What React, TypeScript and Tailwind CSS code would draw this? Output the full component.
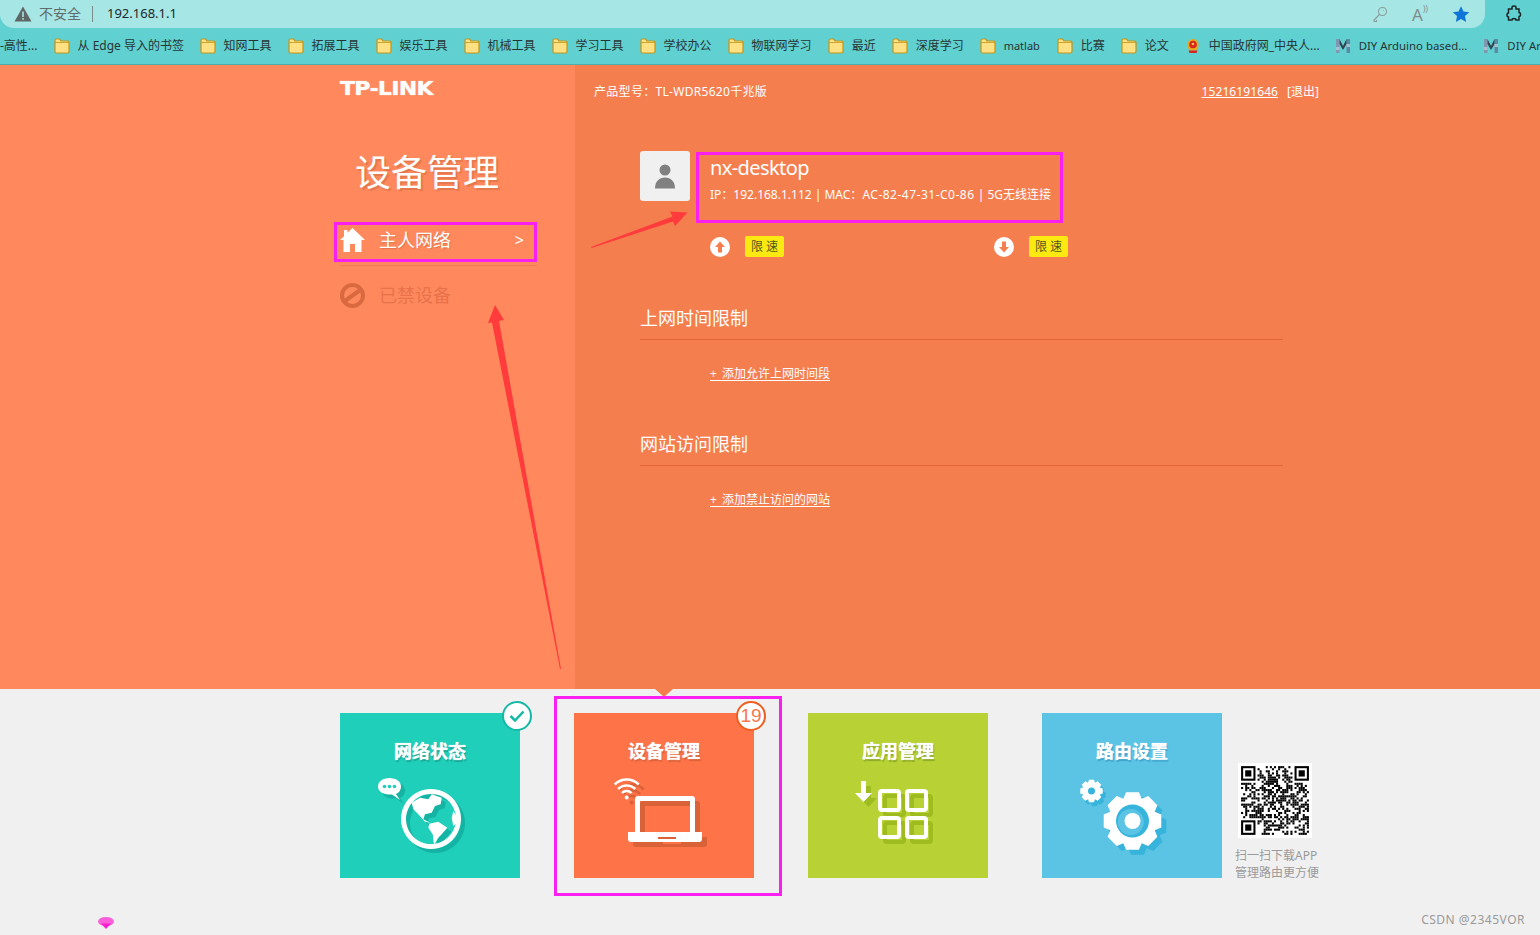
const FONT = "font-['Noto_Sans','Noto_Sans_CJK_SC',sans-serif]";

const BOOKMARKS = [
  { label: "从 Edge 导入的书签", cls: "w-[106px]" },
  { label: "知网工具", cls: "" },
  { label: "拓展工具", cls: "" },
  { label: "娱乐工具", cls: "" },
  { label: "机械工具", cls: "" },
  { label: "学习工具", cls: "" },
  { label: "学校办公", cls: "" },
  { label: "物联网学习", cls: "" },
  { label: "最近", cls: "" },
  { label: "深度学习", cls: "" },
  { label: "matlab", cls: "w-[37px] text-[11px]" },
  { label: "比赛", cls: "" },
  { label: "论文", cls: "" },
];

function Folder() {
  return (
    <svg width="16" height="16" viewBox="0 0 16 16" className="shrink-0">
      <path d="M1 2.500C1 1.500 1.600 1 2.500 1H5.500l1.500 2h6.500c1 0 1.500.5 1.500 1.500v9c0 1-.5 1.500-1.500 1.500h-11C1.500 15 1 14.500 1 13.500z" fill="#ffe082" stroke="#c2951a" strokeWidth="1.200" />
      <path d="M1 4.500h14" stroke="#c2951a" strokeWidth="0.800" />
    </svg>
  );
}

function MLogo() {
  return (
    <svg width="16" height="16" viewBox="0 0 16 16" className="shrink-0">
      <path d="M1 1h3.500v14H1z" fill="#7d98b0" />
      <path d="M11.500 1H15v14h-3.500z" fill="#5f88a6" />
      <path d="M4.500 1 8 8l3.500-7v5L8 12 4.500 6z" fill="#33424f" />
      <path d="M1 9h3.500v3H1zM11.500 6H15v3h-3.500z" fill="#a9bfd0" />
    </svg>
  );
}

function Emblem() {
  return (
    <svg width="16" height="16" viewBox="0 0 16 16" className="shrink-0">
      <path d="M2.500 7c0-3.500 2.500-6 5.500-6s5.500 2.500 5.500 6c0 2.500-1 4.500-2.500 5.500H5C3.500 11.500 2.500 9.500 2.500 7z" fill="#e8a91f" />
      <circle cx="8" cy="6.500" r="3.800" fill="#d7261e" />
      <circle cx="8" cy="6" r="1.300" fill="#f5c33b" />
      <path d="M3.500 12.500h9l-1 2.500h-7z" fill="#d7261e" />
    </svg>
  );
}

function BrowserChrome() {
  return (
    <div className={`h-[65px] bg-[#60d0d0] border-b border-[#4aaeae] ${FONT}`}>
      <div className="flex h-[28px]">
        <div className="flex flex-1 items-center rounded-br-[14px] rounded-bl-[14px] bg-[#a6e6e4] pl-[14px] pr-[15px]">
          <svg width="18" height="16" viewBox="0 0 18 16">
            <path d="M9 .5 17.500 15.500H.5z" fill="#5f6666" />
            <path d="M8.200 5.500h1.600v5.500H8.200zM8.200 12h1.600v1.700H8.200z" fill="#a6e6e4" />
          </svg>
          <span className="ml-[7px] -translate-y-px text-[14px] text-[#626b6b]">不安全</span>
          <span className="ml-[11px] h-[16px] w-px bg-[#7b8c8c]" />
          <span className="ml-[14px] text-[13px] text-[#20282c]">192.168.1.1</span>
          <div className="ml-auto flex items-center gap-[24px]">
            <svg width="16" height="16" viewBox="0 0 16 16" fill="none" stroke="#8c9a9a" strokeWidth="1.100">
              <circle cx="10.500" cy="5.500" r="4" />
              <path d="M7.500 8.500 2 14v1.500h2.500V14M11 4.500h.5" />
            </svg>
            <span className="relative w-[16px] text-[17px] leading-none text-[#808c8c]">A<span className="absolute left-[11px] top-[-1px] text-[8px]">))</span></span>
            <svg width="18" height="18" viewBox="0 0 24 24" fill="#0f75d9">
              <path d="M12 1.500 15.300 8.500 23 9.500l-5.700 5.300 1.500 7.700L12 18.700l-6.800 3.800 1.500-7.700L1 9.500l7.700-1z" />
            </svg>
          </div>
        </div>
        <div className="flex w-[55px] items-center pl-[20px]">
          <svg width="18" height="18" viewBox="0 0 18 18" fill="none" stroke="#1d2424" strokeWidth="1.500">
            <path d="M7 2.500c0-2 4-2 4 0v1.500h3v3.500c2 0 2 4 0 4V15H11c0-2-4-2-4 0H3.500v-3c-2 0-2-4 0-4V4H7z" />
          </svg>
        </div>
      </div>
      <div className="flex h-[36px] items-center gap-4 overflow-hidden whitespace-nowrap text-[12px] text-[#273535]">
        <span className="shrink-0">-高性...</span>
        {BOOKMARKS.map((b) => (
          <div key={b.label} className="flex shrink-0 items-center gap-2">
            <Folder />
            <span className={b.cls}>{b.label}</span>
          </div>
        ))}
        <div className="flex shrink-0 items-center gap-2">
          <Emblem />
          <span className="w-[110px]">中国政府网_中央人...</span>
        </div>
        <div className="flex shrink-0 items-center gap-2">
          <MLogo />
          <span className="text-[11.4px]">DIY Arduino based...</span>
        </div>
        <div className="flex shrink-0 items-center gap-2">
          <MLogo />
          <span className="text-[11.4px]">DIY Ar</span>
        </div>
      </div>
    </div>
  );
}

function HomeIcon() {
  return (
    <svg width="25" height="24" viewBox="0 0 25 24" fill="#fff">
      <path d="M12.500 0 25 12h-3.500v12h-6.500v-8h-5v8H3.500V12H0L4 8.200V2h3.500v2.800z" />
    </svg>
  );
}

function BanIcon() {
  return (
    <svg width="25" height="25" viewBox="0 0 25 25" fill="none" stroke="#d9693f" strokeWidth="4">
      <circle cx="12.500" cy="12.500" r="10.500" />
      <path d="M5.500 17.500 19.500 7.500" />
    </svg>
  );
}

function Sidebar() {
  return (
    <div className="w-[575px] shrink-0 bg-[#ff895d] pl-[340px] pr-[38px]">
      <div className="mt-[15px] h-[16px] origin-left scale-x-[1.16] font-['DejaVu_Sans',sans-serif] text-[19px] font-bold leading-[16px] tracking-[-0.6px] text-white [text-shadow:0_0_1px_#fff]">TP-LINK</div>
      <h1 className="mt-[53px] pl-[15px] text-[36px] leading-[48px] text-white [text-shadow:2px_2px_1px_rgba(180,90,50,0.35)]">设备管理</h1>
      <div className="mt-[22px] flex h-[42px] items-center">
        <HomeIcon />
        <span className="ml-[14px] text-[18px] text-white [text-shadow:1px_1px_1px_rgba(180,90,50,0.4)]">主人网络</span>
        <span className="ml-auto pr-[13px] text-[16px] text-white">&gt;</span>
      </div>
      <div className="mt-[4px] h-px bg-[#e87c54]" />
      <div className="mt-[15px] flex h-[28px] items-center">
        <BanIcon />
        <span className="ml-[14px] text-[18px] text-[#e8734a]">已禁设备</span>
      </div>
    </div>
  );
}

function LimitRow({ up }: { up: boolean }) {
  return (
    <div className="flex w-[284px] items-center">
      <svg width="20" height="20" viewBox="0 0 20 20">
        <circle cx="10" cy="10" r="10" fill="#fff" />
        {up ? (
          <path d="M10 4.500 15 10h-3v5.500H8V10H5z" fill="#f57e4f" />
        ) : (
          <path d="M10 15.500 15 10h-3V4.500H8V10H5z" fill="#f57e4f" />
        )}
      </svg>
      <span className="ml-[15px] flex h-[21px] w-[39px] items-center justify-center rounded-[2px] bg-[#fbe911] pl-[3px] text-[12px] tracking-[3px] text-[#4f5a20]">限速</span>
    </div>
  );
}

function Section({ title, link }: { title: string; link: string }) {
  return (
    <div className="w-[643px]">
      <div className="h-[34px] text-[18px] leading-[26px] text-white">{title}</div>
      <div className="h-px bg-[#e0663a]" />
      <div className="h-[34px] pl-[70px] pt-[24px] text-[12px] leading-[20px] text-white">
        <span className="underline underline-offset-2"><span className="tracking-[1px]">+ </span>{link}</span>
      </div>
    </div>
  );
}

function DetailPanel() {
  return (
    <div className="flex-1 bg-[#f57e4f] text-white">
      <div className="mt-[18px] flex h-[18px] items-center justify-between pl-[19px] pr-[221px] text-[12px]">
        <span className="tracking-[0.3px]">产品型号：TL-WDR5620千兆版</span>
        <span className="flex gap-[9px]">
          <span className="tracking-[0.1px] underline">15216191646</span>
          <span>[退出]</span>
        </span>
      </div>
      <div className="mt-[50px] pl-[65px]">
        <div className="flex">
          <div className="flex h-[50px] w-[50px] items-center justify-center rounded-[3px] bg-[#f0f0f0]">
            <svg width="22" height="25" viewBox="0 0 22 25" fill="#808080">
              <circle cx="11" cy="6" r="5.500" />
              <path d="M1 24.500c0-7 4-11 10-11s10 4 10 11z" />
            </svg>
          </div>
          <div className="ml-[20px]">
            <div className="mt-[3px] text-[20px] leading-[28px] tracking-[-0.6px]">nx-desktop</div>
            <div className="mt-[4px] whitespace-pre text-[12px] leading-[18px]">
              IP：192.168.1.112 | MAC：<span className="tracking-[0.5px]">AC-82-47-31-C0-86</span> | 5G无线连接
            </div>
          </div>
        </div>
        <div className="ml-[70px] mt-[32px] flex">
          <LimitRow up />
          <LimitRow up={false} />
        </div>
        <div className="mt-[48px] flex flex-col gap-[57px]">
          <Section title="上网时间限制" link="添加允许上网时间段" />
          <Section title="网站访问限制" link="添加禁止访问的网站" />
        </div>
      </div>
    </div>
  );
}

function GlobeIcon() {
  const art = (
    <>
      <path d="M1 11.500C1 6.500 6 3 12.500 3S24 6.500 24 11.500c0 4-2.500 6.500-5 7.500l4 6-8-5.500C7 20 1 17 1 11.500z" />
      <path fillRule="evenodd" d="M54 14a30 30 0 1 0 .01 0zM54 19a25 25 0 1 1-.01 0z" />
      <g transform="translate(0 1)">
        <path d="M34.700 26.700 43 21.700 51.300 23.300 54.700 18.300 64.700 21.700 63.700 28.300 58 30 54.700 36.700 48 38.300 46.300 43.300 53 46.700 48 45.700 41.300 38.300 36.300 33.300z" />
        <path d="M52.300 47.700 61.300 45.700 70.300 51.700 64.700 58.300 61.300 61.700 57 69 55.700 58.300 51.300 51.700z" />
        <path d="M76.300 35 82.300 45 76.300 50 74.700 42z" />
      </g>
    </>
  );
  return (
    <svg width="92" height="82" viewBox="0 0 92 82" className="absolute left-[37px] top-[62px]">
      <g fill="#14b3a3" transform="translate(4 4)">{art}</g>
      <g fill="#fff">{art}</g>
      <circle cx="7.500" cy="11.500" r="1.800" fill="#1fcfba" />
      <circle cx="12.500" cy="11.500" r="1.800" fill="#1fcfba" />
      <circle cx="17.500" cy="11.500" r="1.800" fill="#1fcfba" />
    </svg>
  );
}

function LaptopIcon() {
  const art = (
    <>
      <path d="M8.700 9.500a17 17 0 0 1 24 0M12.200 14a12 12 0 0 1 17 0M16 18a6.500 6.500 0 0 1 9.500 0" fill="none" stroke="currentColor" strokeWidth="2.500" />
      <circle cx="20.700" cy="22.500" r="2" fill="currentColor" />
      <path fillRule="evenodd" d="M29 24a3 3 0 0 1 3-3h54a3 3 0 0 1 3 3v33H29zM34 26v31h50V26z" fill="currentColor" />
      <path fillRule="evenodd" d="M22 57h74v7a3 3 0 0 1-3 3H25a3 3 0 0 1-3-3zM52 62v2h18v-2z" fill="currentColor" />
    </>
  );
  return (
    <svg width="104" height="76" viewBox="0 0 104 76" className="absolute left-[32px] top-[62px]">
      <g className="text-[#d96238]" transform="translate(5 5)">{art}</g>
      <g className="text-white">{art}</g>
    </svg>
  );
}

const APP_SQUARES = [[23, 11], [50, 11], [23, 38], [50, 38]];

function AppsIcon() {
  const art = (
    <>
      <path d="M6 3h5v12h6L8.500 24 0 15h6z" fill="currentColor" />
      {APP_SQUARES.map(([x, y]) => (
        <rect key={`${x}-${y}`} x={x + 2} y={y + 2} width="19" height="19" rx="2" fill="none" stroke="currentColor" strokeWidth="4" />
      ))}
    </>
  );
  return (
    <svg width="82" height="74" viewBox="0 0 82 74" className="absolute left-[47px] top-[65px]">
      <g className="text-[#9ebb1f]" transform="translate(5 5)">{art}</g>
      <g className="text-white">{art}</g>
    </svg>
  );
}

function gearPath(cx: number, cy: number, outer: number, inner: number, teeth: number) {
  const pts: string[] = [];
  const step = (Math.PI * 2) / teeth;
  for (let i = 0; i < teeth; i++) {
    const a = i * step - Math.PI / 2;
    const list: [number, number][] = [[-0.5, inner], [-0.28, outer], [0.28, outer], [0.5, inner]];
    for (const [k, r] of list) {
      pts.push(`${(cx + Math.cos(a + k * step) * r).toFixed(2)} ${(cy + Math.sin(a + k * step) * r).toFixed(2)}`);
    }
  }
  return "M" + pts.join("L") + "z";
}

function GearsIcon() {
  const big = gearPath(53.5, 47, 29.5, 24, 8);
  const small = gearPath(12.5, 17, 11.5, 9, 8);
  return (
    <svg width="92" height="88" viewBox="0 0 92 88" className="absolute left-[37px] top-[61px]">
      <path d={big} fill="#37b4dc" transform="translate(5 5)" />
      <path d={small} fill="#37b4dc" transform="translate(3 4)" />
      <path d={big} fill="#fff" />
      <path d={small} fill="#fff" />
      <circle cx="12.500" cy="17" r="3.500" fill="#37b4dc" />
      <circle cx="53.500" cy="47" r="16.500" fill="#37b4dc" />
      <circle cx="51.800" cy="48" r="13" fill="#5bc4e5" />
      <circle cx="53.500" cy="47" r="8" fill="#fff" />
    </svg>
  );
}

function Tile({ title, bg, shadow, children }: { title: string; bg: string; shadow: string; children: React.ReactNode }) {
  return (
    <div className={`relative h-[165px] w-[180px] shrink-0 ${bg}`}>
      <div className={`pt-[25px] text-center text-[18px] font-bold leading-[26px] text-white ${shadow}`}>{title}</div>
      {children}
    </div>
  );
}

function QrCode() {
  const n = 33;
  const cells: [number, number][] = [];
  let seed = 77;
  const inFinder = (x: number, y: number) => (x < 8 && y < 8) || (x >= n - 8 && y < 8) || (x < 8 && y >= n - 8);
  for (let y = 0; y < n; y++) {
    for (let x = 0; x < n; x++) {
      seed = (seed * 1103515245 + 12345) & 0x7fffffff;
      if (!inFinder(x, y) && (seed >> 16) % 100 < 52) cells.push([x, y]);
    }
  }
  const finders = [[0, 0], [n - 7, 0], [0, n - 7]];
  return (
    <svg width="74" height="75" viewBox="-1.500 -1.500 36 36" preserveAspectRatio="none" className="bg-white">
      {cells.map(([x, y]) => <rect key={`${x}-${y}`} x={x} y={y} width="1" height="1" fill="#000" />)}
      {finders.map(([x, y]) => (
        <g key={`${x}-${y}`}>
          <rect x={x} y={y} width="7" height="7" fill="#000" />
          <rect x={x + 1} y={y + 1} width="5" height="5" fill="#fff" />
          <rect x={x + 2} y={y + 2} width="3" height="3" fill="#000" />
        </g>
      ))}
    </svg>
  );
}

function BottomBar() {
  return (
    <div className="relative h-[246px] bg-[#f0f0f0]">
      <div className="absolute left-[655px] top-0 h-0 w-0 border-x-[9px] border-t-[8px] border-x-transparent border-t-[#f57e4f]" />
      <div className="flex pl-[340px] pt-[24px]">
        <div className="flex gap-[54px]">
          <Tile title="网络状态" bg="bg-[#1fcfba]" shadow="[text-shadow:0_0_1px_#fff,1px_2px_1px_rgba(20,140,125,0.6)]">
            <GlobeIcon />
            <div className="absolute right-[-12px] top-[-12px] flex h-[30px] w-[30px] items-center justify-center rounded-full border-2 border-[#14b8a6] bg-white">
              <svg width="16" height="12" viewBox="0 0 16 12" fill="none" stroke="#14b8a6" strokeWidth="2.500">
                <path d="M1.500 6 6 10.500 14.500 1.500" />
              </svg>
            </div>
          </Tile>
          <Tile title="设备管理" bg="bg-[#ff7348]" shadow="[text-shadow:0_0_1px_#fff,1px_2px_1px_rgba(200,90,50,0.7)]">
            <LaptopIcon />
            <div className="absolute right-[-12px] top-[-12px] flex h-[30px] w-[30px] items-center justify-center rounded-full border-2 border-[#ee5f22] bg-white font-['Liberation_Sans',sans-serif] text-[19px] text-[#f67850]">19</div>
          </Tile>
          <Tile title="应用管理" bg="bg-[#b8d235]" shadow="[text-shadow:0_0_1px_#fff,1px_2px_1px_rgba(130,160,30,0.8)]">
            <AppsIcon />
          </Tile>
          <Tile title="路由设置" bg="bg-[#5bc4e5]" shadow="[text-shadow:0_0_1px_#fff,1px_2px_1px_rgba(50,150,190,0.7)]">
            <GearsIcon />
          </Tile>
        </div>
        <div className="ml-[13px] mt-[50px] flex flex-col text-[12px] leading-[17px] text-[#9a9a9a]">
          <div className="pl-[3px]"><QrCode /></div>
          <div className="mt-[9px]">扫一扫下载APP</div>
          <div>管理路由更方便</div>
        </div>
      </div>
      <div className="absolute bottom-[6px] right-[15px] text-[12px] tracking-[0.5px] text-[#9a9a9a]">CSDN @2345VOR</div>
      <svg width="16" height="12" viewBox="0 0 16 12" className="absolute left-[98px] top-[228px]">
        <ellipse cx="8" cy="4.500" rx="8" ry="4.500" fill="#f95fd8" />
        <path d="M3 6.500h10L8 12z" fill="#f81fd0" />
      </svg>
    </div>
  );
}

// annotation overlay drawn on top of the screenshot
function Annotations() {
  return (
    <>
      <div className="pointer-events-none absolute left-[334px] top-[222px] h-[40px] w-[203px] border-[3px] border-[#f81ff0]" />
      <div className="pointer-events-none absolute left-[696px] top-[152px] h-[71px] w-[367px] border-[3px] border-[#f81ff0]" />
      <div className="pointer-events-none absolute left-[554px] top-[696px] h-[200px] w-[228px] border-[3px] border-[#f81ff0]" />
      <svg width="1540" height="935" className="pointer-events-none absolute left-0 top-0">
        <path d="M591 247 591.500 248 673 221.500 675 226 687.500 212.500 670 211.500 672.500 216.500z" fill="#ff3b3b" />
        <path d="M560 669 561 669 499 321 504 320 495 305 488 323 492 322.500z" fill="#ff3b3b" />
      </svg>
    </>
  );
}

export default function App() {
  return (
    <div className={`relative h-[935px] w-[1540px] overflow-hidden ${FONT}`}>
      <BrowserChrome />
      <div className="flex h-[624px]">
        <Sidebar />
        <DetailPanel />
      </div>
      <BottomBar />
      <Annotations />
    </div>
  );
}
